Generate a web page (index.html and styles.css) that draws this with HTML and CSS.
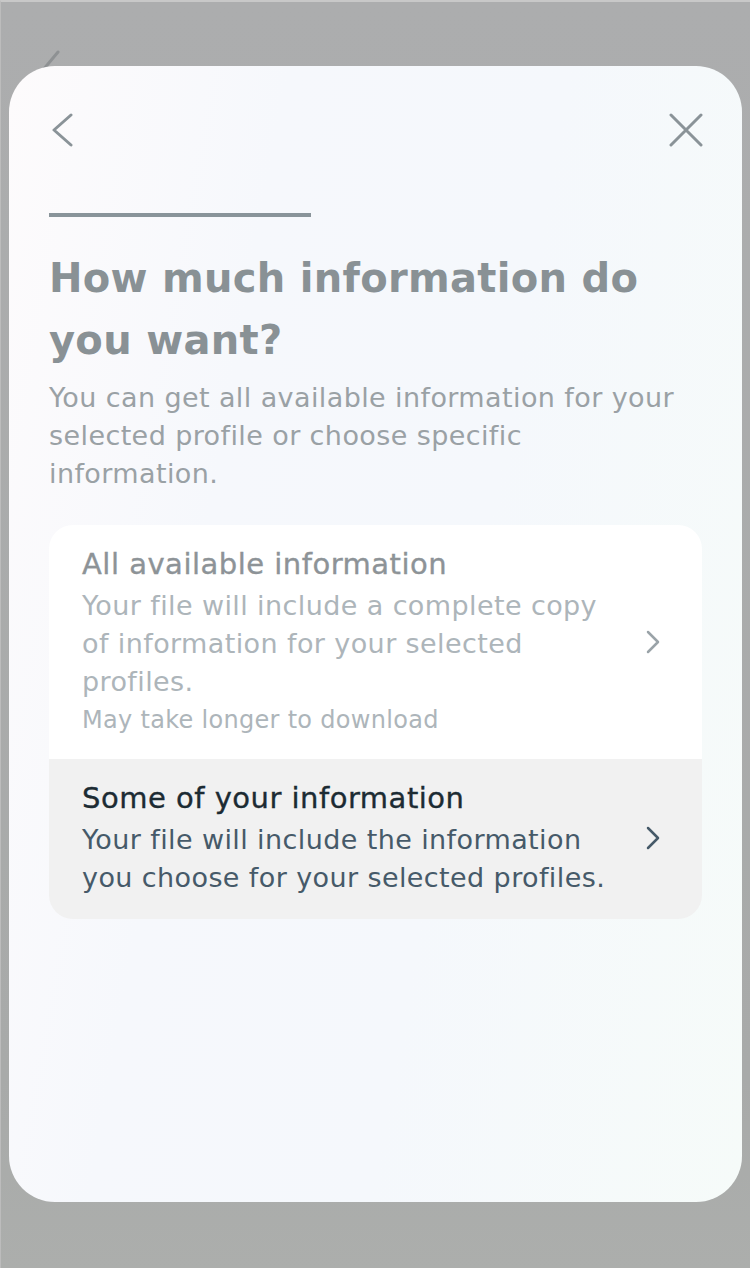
FILE: index.html
```html
<!DOCTYPE html>
<html lang="en">
<head>
<meta charset="utf-8">
<link rel="stylesheet" href="styles.css">
</head>
<body>
<div class="screen">
  <svg class="ghost-back" width="26" height="22" viewBox="0 0 26 22"><path d="M21 4 L6 22" stroke="#8e9193" stroke-width="3" stroke-linecap="round" fill="none"/></svg>
  <div class="sheet">
    <div class="topbar">
      <button class="icon-btn" aria-label="Back">
        <svg width="26" height="34" viewBox="0 0 26 34"><path d="M22 2 L5 17 L22 32" stroke="#8a9398" stroke-width="3" stroke-linecap="round" stroke-linejoin="round" fill="none"/></svg>
      </button>
      <button class="icon-btn" aria-label="Close">
        <svg width="36" height="34" viewBox="0 0 36 34"><path d="M3 2 L33 32 M33 2 L3 32" stroke="#8a9398" stroke-width="3" stroke-linecap="round" fill="none"/></svg>
      </button>
    </div>
    <div class="progress"></div>
    <h1 class="title">How much information do you want?</h1>
    <p class="subtitle">You can get all available information for your selected profile or choose specific information.</p>
    <div class="card">
      <div class="option option-dim">
        <div class="option-text">
          <div class="option-title">All available information</div>
          <div class="option-desc">Your file will include a complete copy of information for your selected profiles.</div>
          <div class="option-note">May take longer to download</div>
        </div>
        <svg class="chev" width="16" height="24" viewBox="0 0 16 24"><path d="M3 2 L13 12 L3 22" stroke="#9aa3a8" stroke-width="2.5" stroke-linecap="round" stroke-linejoin="round" fill="none"/></svg>
      </div>
      <div class="option option-active">
        <div class="option-text">
          <div class="option-title">Some of your information</div>
          <div class="option-desc">Your file will include the information you choose for your selected profiles.</div>
        </div>
        <svg class="chev" width="16" height="24" viewBox="0 0 16 24"><path d="M3 2 L13 12 L3 22" stroke="#465a69" stroke-width="2.5" stroke-linecap="round" stroke-linejoin="round" fill="none"/></svg>
      </div>
    </div>
  </div>
</div>
</body>
</html>
```
FILE: styles.css
```css
* { box-sizing: border-box; }
html, body { margin: 0; padding: 0; }
body {
  width: 750px;
  height: 1268px;
  background: #a9aaab;
  font-family: "DejaVu Sans", Inter, sans-serif;
  overflow: hidden;
}
.screen {
  position: relative;
  height: 1268px;
  padding: 66px 8px 0 8px;
  border-top: 2px solid #c8c8c8;
  border-left: 1px solid #bcbcbc;
  background: linear-gradient(180deg, #acadae 0%, #a8aaa9 85%, #acaeac 100%);
}
.ghost-back {
  position: absolute;
  left: 36px;
  top: 46px;
}
.sheet {
  position: relative;
  height: 1136px;
  margin-top: -2px;
  border-radius: 46px;
  background: linear-gradient(100deg, #fdfbfc 0%, #f6f8fc 30%, #f5f8fc 60%, #f6fbf9 100%);
  padding: 44px 40px 0 40px;
}
.topbar {
  display: flex;
  justify-content: space-between;
  align-items: center;
  height: 40px;
  margin-right: -2px;
}
.icon-btn {
  border: 0;
  background: none;
  padding: 0;
  display: flex;
}
.progress {
  width: 262px;
  height: 4px;
  background: #89949a;
  margin-top: 63px;
}
.title {
  margin: 30px 0 0 0;
  font-size: 40px;
  line-height: 62px;
  font-weight: 700;
  color: #899195;
  letter-spacing: 0.3px;
}
.subtitle {
  margin: 8px 0 0 0;
  font-size: 27px;
  line-height: 38px;
  color: #9aa1a5;
  letter-spacing: 0.4px;
  padding-right: 20px;
}
.card {
  margin-top: 32px;
  border-radius: 24px;
  overflow: hidden;
}
.option {
  display: flex;
  align-items: center;
  gap: 19px;
  padding: 0 41px 0 33px;
}
.option-text { flex: 1; }
.option-dim {
  background: #ffffff;
  padding-top: 20px;
  padding-bottom: 20px;
}
.option-active {
  background: #f1f1f1;
  padding-top: 20px;
  padding-bottom: 22px;
}
.option-title {
  font-size: 29px;
  line-height: 38px;
  letter-spacing: 0.5px;
  -webkit-text-stroke: 0.35px currentColor;
}
.option-desc {
  font-size: 27px;
  line-height: 38px;
  letter-spacing: 0.4px;
  margin-top: 4px;
}
.option-note {
  font-size: 24px;
  line-height: 38px;
  letter-spacing: 0.3px;
}
.option-dim .option-title { color: #8d9397; }
.option-dim .option-desc, .option-dim .option-note { color: #adb5ba; }
.option-active .option-title { color: #1c2b33; }
.option-active .option-desc { color: #465a69; }
.chev { flex: none; }
```
